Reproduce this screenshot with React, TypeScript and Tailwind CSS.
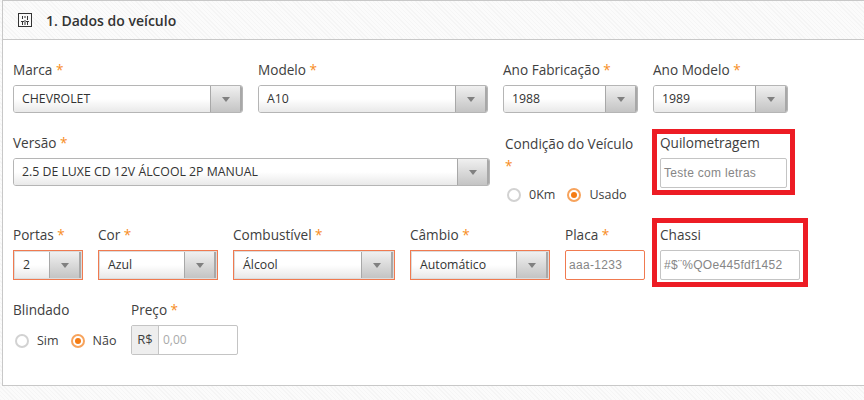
const openSans = "font-['Open_Sans','Liberation_Sans',sans-serif]";
const texture =
  "bg-[repeating-linear-gradient(45deg,#f5f5f5_0,#f5f5f5_1px,#fbfbfb_1px,#fbfbfb_3px)]";

function Label({ text, required }: { text: string; required?: boolean }) {
  return (
    <div className="h-5 mb-[5px] text-[13.6px] leading-5 text-[#404040] whitespace-nowrap">
      {text}
      {required && <span className="text-[#f78d1e]"> *</span>}
    </div>
  );
}

function Select({ value, width, error }: { value: string; width: string; error?: boolean }) {
  return (
    <div
      className={`flex ${width} ${
        error
          ? "h-[30px] border border-[#f07a50] p-[1px] bg-[#dcdcdc]"
          : "h-[28px] border border-[#b5b5b5] rounded-[3px]"
      } overflow-hidden`}
    >
      <div className="flex-1 min-w-0 flex items-center pl-[8px] text-[12.3px] text-[#333] whitespace-nowrap bg-gradient-to-b from-white via-white to-[#e9e9e9]">
        {value}
      </div>
      <div className="w-[32px] shrink-0 flex items-center justify-center border-l border-[#a8a8a8] border-r-2 border-r-[#a8a8a8] bg-gradient-to-b from-[#f0f0f0] to-[#c4c4c4]">
        <svg width="8" height="5" viewBox="0 0 8 5">
          <path d="M0 0h8L4 5z" fill="#808080" />
        </svg>
      </div>
    </div>
  );
}

function Radio({ label, checked }: { label: string; checked?: boolean }) {
  return (
    <div className="flex items-center gap-[8px] text-[12.5px] text-[#404040]">
      <span
        className={`w-[14px] h-[14px] rounded-full flex items-center justify-center bg-white border-2 ${
          checked ? "border-[#f7a35c]" : "border-[#d2d2d2]"
        }`}
      >
        {checked && <span className="w-[6px] h-[6px] rounded-full bg-[#f57c14]" />}
      </span>
      {label}
    </div>
  );
}

function TextInput({ value, width, error }: { value: string; width: string; error?: boolean }) {
  return (
    <div
      className={`${width} h-[30px] flex items-center pl-[3px] bg-white border rounded-[2px] text-[12px] tracking-[0.3px] text-[#868686] font-['Liberation_Sans',sans-serif] whitespace-nowrap ${
        error ? "border-[#f07a50]" : "border-[#c4c4c4]"
      }`}
    >
      {value}
    </div>
  );
}

function GridIcon() {
  return (
    <svg width="14" height="14" viewBox="0 0 14 14" fill="none" stroke="#333" strokeWidth="1">
      <rect x="0.5" y="0.5" width="13" height="13" />
      <path d="M4.5 3v3M7 3v2M9.5 3v4M3 8.5h3M4.5 9v3M7 7v5M8 8.5h3M9.5 9v3" />
    </svg>
  );
}

export default function App() {
  return (
    <div className={`w-[864px] h-[400px] overflow-hidden pl-[2px] ${texture} ${openSans}`}>
      <div className="relative h-[386px] bg-white border border-r-0 border-[#c8c8c8]">
        {/* Cabeçalho */}
        <div className={`h-[39px] flex items-center pl-[15px] gap-[14px] border-b border-[#c8c8c8] ${texture}`}>
          <GridIcon />
          <h2 className="text-[14px] font-semibold text-[#333]">1. Dados do veículo</h2>
        </div>

        <div className="pl-[10px] pt-[20px]">
          {/* Marca, modelo, anos */}
          <div className="flex gap-[15px]">
            <div>
              <Label text="Marca" required />
              <Select value="CHEVROLET" width="w-[230px]" />
            </div>
            <div>
              <Label text="Modelo" required />
              <Select value="A10" width="w-[230px]" />
            </div>
            <div>
              <Label text="Ano Fabricação" required />
              <Select value="1988" width="w-[135px]" />
            </div>
            <div>
              <Label text="Ano Modelo" required />
              <Select value="1989" width="w-[135px]" />
            </div>
          </div>

          {/* Versão, condição, quilometragem */}
          <div className="flex mt-[20px] h-[62px]">
            <div>
              <Label text="Versão" required />
              <Select value="2.5 DE LUXE CD 12V ÁLCOOL 2P MANUAL" width="w-[477px]" />
            </div>
            <div className="ml-[15px] w-[155px]">
              <div className="text-[13.6px] leading-[22px] text-[#404040] w-[132px]">
                Condição do Veículo <span className="text-[#f78d1e]">*</span>
              </div>
              <div className="flex gap-[12px] mt-[9px] pl-[2px]">
                <Radio label="0Km" />
                <Radio label="Usado" checked />
              </div>
            </div>
            <div>
              <Label text="Quilometragem" />
              <TextInput value="Teste com letras" width="w-[127px]" />
            </div>
          </div>

          {/* Portas, cor, combustível, câmbio, placa, chassi */}
          <div className="flex gap-[15px] mt-[30px]">
            <div>
              <Label text="Portas" required />
              <Select value="2" width="w-[70px]" error />
            </div>
            <div>
              <Label text="Cor" required />
              <Select value="Azul" width="w-[120px]" error />
            </div>
            <div>
              <Label text="Combustível" required />
              <Select value="Álcool" width="w-[162px]" error />
            </div>
            <div>
              <Label text="Câmbio" required />
              <Select value="Automático" width="w-[140px]" error />
            </div>
            <div>
              <Label text="Placa" required />
              <TextInput value="aaa-1233" width="w-[80px]" error />
            </div>
            <div>
              <Label text="Chassi" />
              <TextInput value="#$¨%QOe445fdf1452" width="w-[140px]" />
            </div>
          </div>

          {/* Blindado, preço */}
          <div className="flex mt-[20px]">
            <div className="w-[118px]">
              <Label text="Blindado" />
              <div className="flex gap-[12px] pl-[2px] mt-[12px]">
                <Radio label="Sim" />
                <Radio label="Não" checked />
              </div>
            </div>
            <div>
              <Label text="Preço" required />
              <div className="flex w-[107px] h-[30px] border border-[#c4c4c4] rounded-[2px]">
                <div className="w-[27px] flex items-center justify-center bg-[#eeeeee] border-r border-[#c4c4c4] text-[13px] text-[#404040]">
                  R$
                </div>
                <div className="flex-1 flex items-center pl-[4px] text-[12px] text-[#aaa]">0,00</div>
              </div>
            </div>
          </div>
        </div>

        {/* Marcações vermelhas sobre o print */}
        <div className="absolute left-[649px] top-[128px] w-[143px] h-[66px] border-[5px] border-[#ed1c24]" />
        <div className="absolute left-[649px] top-[217px] w-[156px] h-[69px] border-[5px] border-[#ed1c24]" />
      </div>
    </div>
  );
}
